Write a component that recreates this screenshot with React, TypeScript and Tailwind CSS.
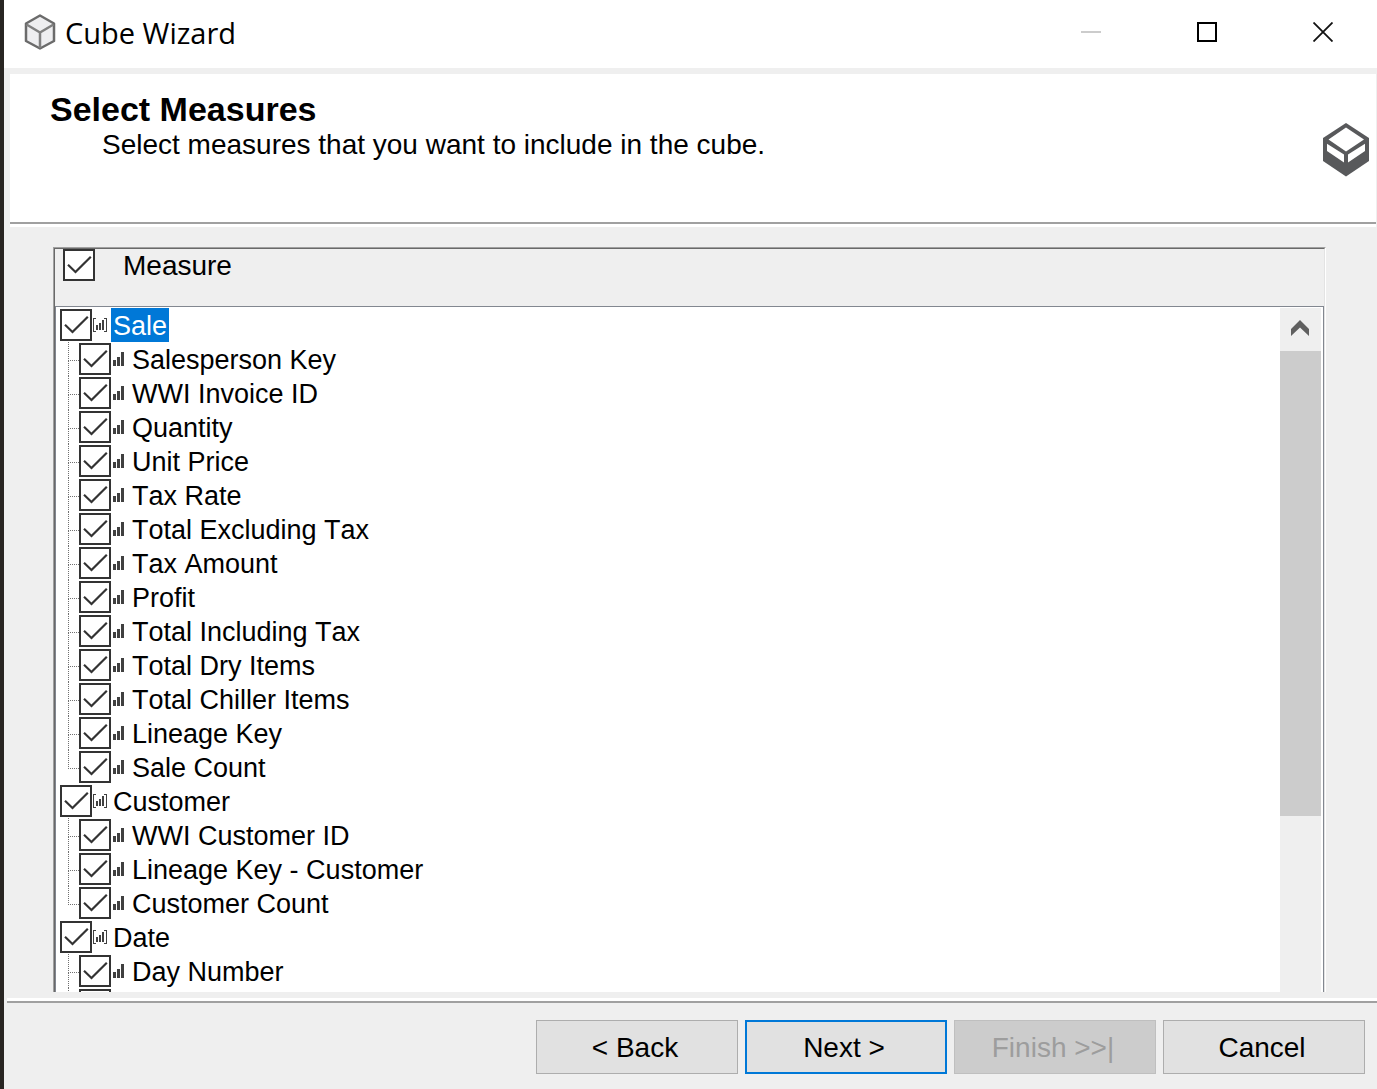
import React, { useState } from "react";

type Group = { name: string; items: string[] };

const groups: Group[] = [
  {
    name: "Sale",
    items: [
      "Salesperson Key",
      "WWI Invoice ID",
      "Quantity",
      "Unit Price",
      "Tax Rate",
      "Total Excluding Tax",
      "Tax Amount",
      "Profit",
      "Total Including Tax",
      "Total Dry Items",
      "Total Chiller Items",
      "Lineage Key",
      "Sale Count",
    ],
  },
  {
    name: "Customer",
    items: ["WWI Customer ID", "Lineage Key - Customer", "Customer Count"],
  },
  { name: "Date", items: ["Day Number", ""] },
];

function CheckBox({ id, label }: { id: string; label?: string }) {
  return (
    <span className="grid size-8 shrink-0">
      <input
        id={id}
        type="checkbox"
        defaultChecked
        aria-label={label}
        className="peer col-start-1 row-start-1 size-8 appearance-none border-2 border-[#333333] bg-white"
      />
      <svg
        viewBox="0 0 32 32"
        className="pointer-events-none invisible col-start-1 row-start-1 size-8 peer-checked:visible"
        fill="none"
        stroke="#333333"
        strokeWidth="2.2"
        aria-hidden="true"
      >
        <path d="M5 15.8 L12.5 23 L27.8 7.8" />
      </svg>
    </span>
  );
}

function GroupIcon() {
  return (
    <svg viewBox="0 0 14 14" className="h-3.5 w-3.5 shrink-0" fill="#404040" aria-hidden="true">
      <path d="M0 0h3v1H1v12h2v1H0zM14 0h-3v1h2v12h-2v1h3z" />
      <path d="M3 7h2v5H3zM6 5h2v7H6zM9 2h2v10H9z" />
    </svg>
  );
}

function MeasureIcon() {
  return (
    <svg viewBox="0 0 11 14" className="h-3.5 w-[11px] shrink-0" fill="#404040" aria-hidden="true">
      <path d="M0 8h3v6H0zM4 5h3v9H4zM8 0h3v14H8z" />
    </svg>
  );
}

function TreeLines({ last }: { last: boolean }) {
  return (
    <span className="flex w-[11px] shrink-0 flex-col self-stretch" aria-hidden="true">
      <span className="h-[19px] border-b border-l border-dotted border-[#707070]" />
      {!last && <span className="flex-1 border-l border-dotted border-[#707070]" />}
    </span>
  );
}

function TitleCube() {
  return (
    <svg viewBox="0 0 32 36" className="h-9 w-8" fill="none" stroke="#6b6b6b" strokeWidth="2.5" strokeLinejoin="round" aria-hidden="true">
      <path d="M16 1.5 L30 9.5 V27 L16 34.5 L2 27 V9.5 Z" fill="#eeeef0" />
      <path d="M2.5 10.5 L16 18.5 L29.5 10.5 M16 18.5 V34" stroke="#808080" />
    </svg>
  );
}

function HeaderCube() {
  return (
    <svg viewBox="0 0 46 54" className="h-[54px] w-[46px] shrink-0" aria-hidden="true">
      <path d="M23 0 L46 15 V38 L23 53.5 L0 38 V15 Z" fill="#58595b" />
      <path d="M23 4.5 L41 16.5 L23 28.5 L5.5 16.5 Z M4 20.7 L21 31.5 V39.5 L4 28 Z M42 20.7 L25 31.5 V39.5 L42 28 Z" fill="#fff" />
    </svg>
  );
}

const footerButton = "h-[54px] w-[202px] pt-0.5 pr-1 text-[28px] leading-8";

export default function App() {
  const [selected, setSelected] = useState("Sale");
  return (
    <div className="flex h-screen flex-col overflow-hidden border-l-4 border-[#282522] bg-[#efefef] font-['Liberation_Sans',Arial,sans-serif] text-[27px] leading-8 text-black [font-kerning:none]">
      <header className="flex h-[68px] shrink-0 items-center justify-between bg-white pl-5">
        <div className="flex items-center gap-[9px] pb-1">
          <TitleCube />
          <h1 className="pt-0.5 font-['Open_Sans',sans-serif] text-[29px] leading-8 [font-kerning:auto]">Cube Wizard</h1>
        </div>
        <div className="flex gap-2 self-stretch pb-1">
          <button aria-label="Minimize" disabled className="flex w-[108px] items-center justify-center">
            <span className="h-0.5 w-5 bg-[#cccccc]" />
          </button>
          <button aria-label="Maximize" className="flex w-[108px] items-center justify-center">
            <span className="size-5 border-2 border-black" />
          </button>
          <button aria-label="Close" className="flex w-[108px] items-center justify-center">
            <svg viewBox="0 0 20 20" className="size-5" stroke="#111" strokeWidth="1.8" aria-hidden="true">
              <path d="M0.5 0.5 L19.5 19.5 M19.5 0.5 L0.5 19.5" />
            </svg>
          </button>
        </div>
      </header>

      <section className="mt-1.5 mr-px ml-1.5 flex h-[153px] shrink-0 flex-col bg-white">
        <div className="flex flex-1 items-center justify-between pt-1 pr-[7px] pl-10">
          <div className="self-start pt-3">
            <h2 className="text-[34px] leading-[38px] font-bold">Select Measures</h2>
            <p className="pt-px pl-[52px] text-[28px]">Select measures that you want to include in the cube.</p>
          </div>
          <HeaderCube />
        </div>
        <div className="mb-[3px] h-0.5 bg-[#a0a0a0]" />
      </section>

      <main className="mt-5 mr-[51px] mb-1.5 ml-[49px] flex min-h-0 flex-1 flex-col border-t border-r border-l border-[#a0a0a0] border-r-white">
        <div className="flex min-h-0 flex-1 flex-col border-t border-r border-l border-[#696969] border-r-[#e3e3e3]">
          <label htmlFor="all" className="flex h-[57px] shrink-0 items-start gap-7 pl-2 text-[28px]">
            <CheckBox id="all" />
            <span className="pt-px">Measure</span>
          </label>
          <div className="flex min-h-0 flex-1 border-t border-r border-l border-[#828790] bg-white pt-px">
            <ul className="min-w-0 flex-1 overflow-hidden pl-1">
              {groups.map((g) => (
                <li key={g.name}>
                  <div className="flex h-[34px] items-center">
                    <CheckBox id={g.name} label={g.name} />
                    <span className="mr-1 ml-px">
                      <GroupIcon />
                    </span>
                    <button
                      onClick={() => setSelected(g.name)}
                      className={
                        selected === g.name
                          ? "h-[34px] bg-[#0078d7] px-0.5 pt-0.5 text-white"
                          : "h-[34px] px-0.5 pt-0.5"
                      }
                    >
                      {g.name}
                    </button>
                  </div>
                  <ul className="pl-2">
                    {g.items.map((item, i) => (
                      <li key={i} className="flex h-[34px] items-center">
                        <TreeLines last={i === g.items.length - 1 && item !== ""} />
                        <CheckBox id={`${g.name}-${i}`} label={item || `${g.name} measure`} />
                        <label htmlFor={`${g.name}-${i}`} className="flex items-center gap-2 pl-0.5">
                          <MeasureIcon />
                          <span className="pt-0.5">{item}</span>
                        </label>
                      </li>
                    ))}
                  </ul>
                </li>
              ))}
            </ul>
            <div className="mr-0.5 flex w-[41px] shrink-0 flex-col bg-[#efefef]">
              <button aria-label="Scroll up" className="flex h-[43px] shrink-0 items-center justify-center pr-px pb-[3px]">
                <svg viewBox="0 0 18 16" className="h-4 w-[18px]" fill="#606060" aria-hidden="true">
                  <path d="M9 0 L18 9 V16 L9 7.5 L0 16 V9 Z" />
                </svg>
              </button>
              <div className="h-[68%] bg-[#cccccc]" />
            </div>
          </div>
        </div>
      </main>

      <footer className="ml-[3px] shrink-0 border-t-[3px] border-white">
        <div className="flex justify-end gap-[7px] border-t-2 border-[#a0a0a0] pt-[17px] pr-3 pb-[15px]">
          <button className={`${footerButton} border border-[#adadad] bg-[#e1e1e1]`}>&lt; Back</button>
          <button className={`${footerButton} border-2 border-[#0078d7] bg-[#e1e1e1]`}>Next &gt;</button>
          <button disabled className={`${footerButton} border border-[#bfbfbf] bg-[#cccccc] text-[#9d9d9d]`}>
            Finish &gt;&gt;|
          </button>
          <button className={`${footerButton} border border-[#adadad] bg-[#e1e1e1]`}>Cancel</button>
        </div>
      </footer>
    </div>
  );
}
